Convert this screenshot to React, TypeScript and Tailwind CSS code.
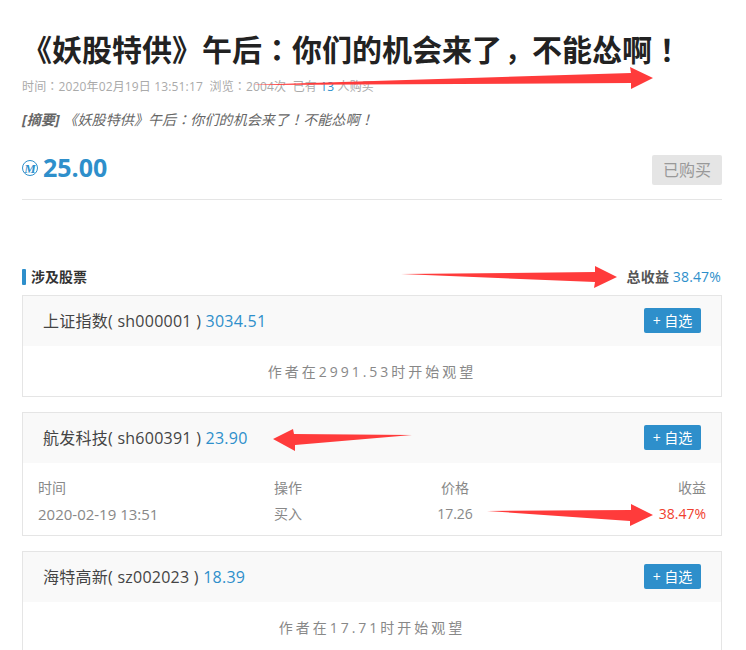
import React from 'react';

const FONT = "font-['Open_Sans','Noto_Sans_CJK_SC',sans-serif]";

const P = ({ children }: { children: React.ReactNode }) => (
  <span className="font-['Noto_Sans_CJK_TC',sans-serif]">{children}</span>
);

const AddButton = () => (
  <button className="mt-[12px] h-[25px] w-[57px] self-start rounded-[2px] bg-[#2e8fcb] text-[14px] leading-[25px] text-white">
    + 自选
  </button>
);

const StockHeader = ({ name, code, price }: { name: string; code: string; price: string }) => (
  <div className="flex h-[50px] items-center justify-between bg-[#f9f9f9] pl-[20px] pr-[20px]">
    <div className="text-[16px] tracking-[0.25px] text-[#444]">
      {name}( {code} ) <span className="text-[#2e8fcb]">{price}</span>
    </div>
    <AddButton />
  </div>
);

const WatchCard = ({ name, code, price, note }: { name: string; code: string; price: string; note: string }) => (
  <div className="mb-[15px] border border-[#e5e5e5] bg-white">
    <StockHeader name={name} code={code} price={price} />
    <div className="h-[50px] text-center text-[14px] leading-[52px] tracking-[3px] text-[#888]">{note}</div>
  </div>
);

const App: React.FC = () => {
  return (
    <div className={`relative h-[650px] w-[746px] overflow-hidden bg-white ${FONT}`}>
      <div className="ml-[22px] w-[700px] pt-[26px]">
        <h1 className="h-[44px] text-[30px] font-bold leading-[44px] text-[#222]">
          《妖股特供》午后<P>：</P>你们的机会来了<span className="pl-[3px] text-[27px]">，</span>不能怂啊<P>！</P>
        </h1>
        <div className="mt-[8px] text-[12px] leading-[16px] tracking-[0.15px] text-[#aaa]">
          时间<P>：</P>2020年02月19日 13:51:17&nbsp;&nbsp;浏览<P>：</P>2004次&nbsp;&nbsp;已有 <span className="text-[#2e8fcb]">13</span> 人购买
        </div>
        <div className="mt-[15px] text-[14px] italic leading-[18px] tracking-[0.1px] text-[#666]">
          <span className="font-bold">[摘要]</span> 《妖股特供》午后<P>：</P>你们的机会来了<P>！</P>不能怂啊<P>！</P>
        </div>

        <div className="mt-[23px] flex h-[47px] items-start justify-between">
          <div className="flex items-center pt-[1px] text-[#2e8fcb]">
            <span className="mt-[2px] flex h-[16px] w-[16px] items-center justify-center rounded-full border border-[#2e8fcb] font-['Liberation_Serif',serif] text-[13px] font-bold italic leading-none">
              M
            </span>
            <span className="ml-[5px] text-[25px] font-bold leading-[28px]">25.00</span>
          </div>
          <div className="mt-[3px] h-[30px] w-[70px] rounded-[2px] bg-[#e5e5e5] text-center text-[16px] leading-[30px] text-[#999]">已购买</div>
        </div>
        <div className="h-px bg-[#e5e5e5]" />

        <div className="mt-[69px] flex h-[16px] items-center justify-between">
          <div className="flex items-center">
            <span className="h-[16px] w-[4px] rounded-[1px] bg-[#2e8fcb]" />
            <span className="mb-[2px] ml-[5px] text-[14px] font-bold text-[#333]">涉及股票</span>
          </div>
          <div className="mb-[2px] pr-px text-[14px] tracking-[0.15px] text-[#2e8fcb]">
            <span className="font-bold text-[#555]">总收益</span> 38.47%
          </div>
        </div>

        <div className="mt-[10px]">
          <WatchCard name="上证指数" code="sh000001" price="3034.51" note="作者在2991.53时开始观望" />

          <div className="mb-[15px] border border-[#e5e5e5] bg-white">
            <StockHeader name="航发科技" code="sh600391" price="23.90" />
            <div className="grid h-[72px] grid-cols-[236px_100px_162px_1fr] content-start px-[15px] pt-[12px] text-[14px] leading-[26px] text-[#888]">
              <div>时间</div>
              <div>操作</div>
              <div className="text-center">价格</div>
              <div className="text-right">收益</div>
              <div className="text-[15px]">2020-02-19 13:51</div>
              <div>买入</div>
              <div className="text-center">17.26</div>
              <div className="text-right text-[#f0402e]">38.47%</div>
            </div>
          </div>

          <WatchCard name="海特高新" code="sz002023" price="18.39" note="作者在17.71时开始观望" />
        </div>
      </div>

      {/* annotation arrows drawn over the screenshot */}
      <svg className="pointer-events-none absolute left-0 top-0" width="746" height="650">
        <g fill="#ff3b3b">
          <polygon points="245,85 631,73 630,67 653,78 631,89 631,83" />
          <polygon points="401,274 595,272 595,266 617,277 594,288 595,282" />
          <polygon points="273,439 293,429 294,434 412,435 295,445 295,451" />
          <polygon points="487,511 631,510 631,504 653,515 630,526 630,521" />
        </g>
      </svg>
    </div>
  );
};

export default App;
